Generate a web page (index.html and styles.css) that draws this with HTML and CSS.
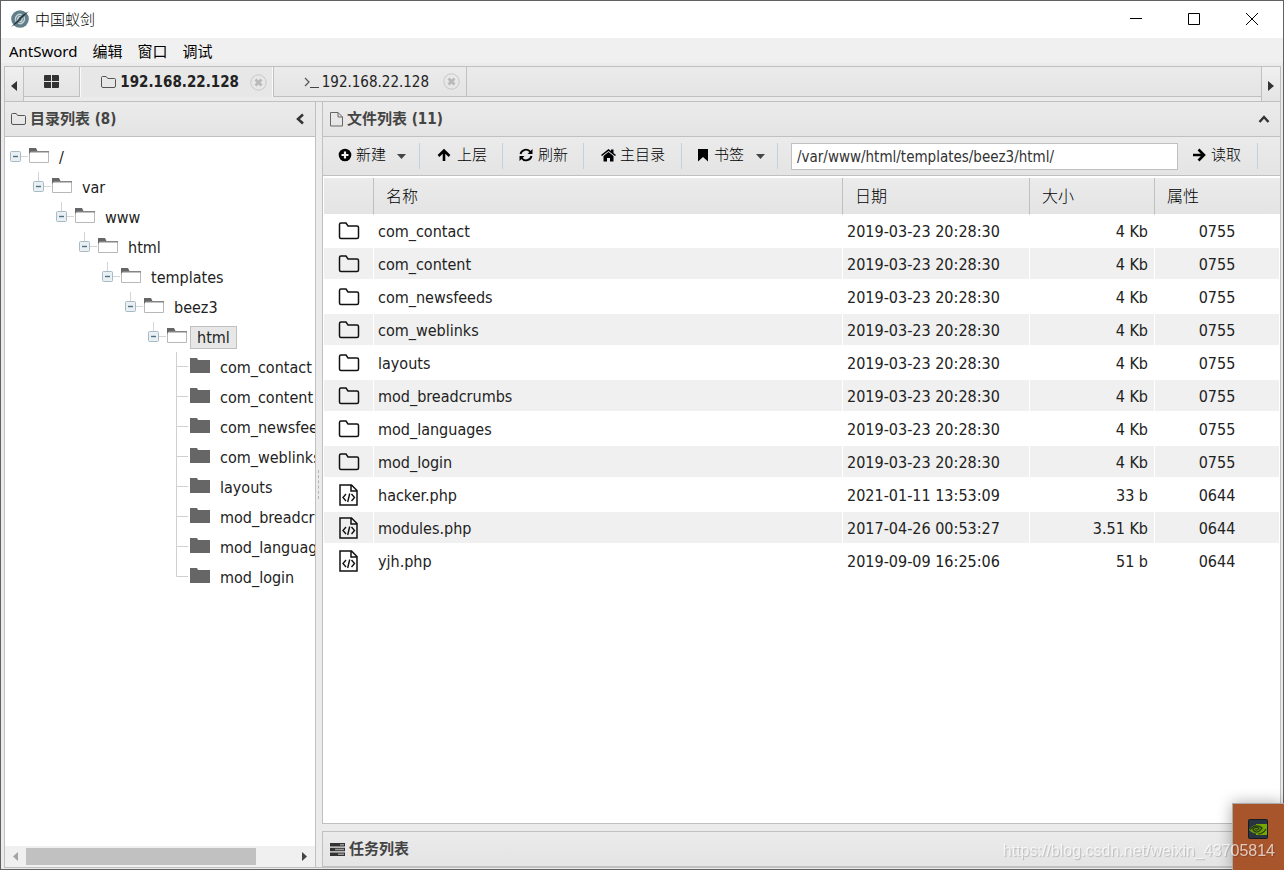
FILE: index.html
```html
<!DOCTYPE html>
<html lang="zh-CN">
<head>
<meta charset="utf-8">
<title>中国蚁剑</title>
<link rel="stylesheet" href="styles.css">
</head>
<body>
<svg class="defs" aria-hidden="true">
  <symbol id="node-open" viewBox="0 0 19 30"><path d="M11 14.500h7" stroke="#d4d4d4"/><rect x=".5" y="9.500" width="10" height="10" rx="1" fill="#e8f0f4" stroke="#a9bac3"/><path d="M3 14.500h5" stroke="#4f7082" stroke-width="1.400"/></symbol>
  <symbol id="node-child" viewBox="0 0 19 30"><path d="M5.500 0v9M11 14.500h7" stroke="#d4d4d4"/><rect x=".5" y="9.500" width="10" height="10" rx="1" fill="#e8f0f4" stroke="#a9bac3"/><path d="M3 14.500h5" stroke="#4f7082" stroke-width="1.400"/></symbol>
  <symbol id="node-leaf" viewBox="0 0 19 30"><path d="M5.500 0v30M5.500 14.500H17" stroke="#d0d0d0" fill="none"/></symbol>
  <symbol id="node-last" viewBox="0 0 19 30"><path d="M5.500 0v14.500H17" stroke="#d0d0d0" fill="none"/></symbol>
  <symbol id="dir-open" viewBox="0 0 20 16"><path d="M.5 3.500h19v11H.5z" fill="#fff" stroke="#b8b8b8"/><path d="M0 3h20v1.500H0z" fill="#858585"/><path d="M0 6V0h7l1.500 3H2z" fill="#666"/></symbol>
  <symbol id="dir" viewBox="0 0 20 16"><path d="M0 0h7l1 2h12v13H0z" fill="#666"/></symbol>
  <symbol id="folder" viewBox="0 0 22 20"><path d="M1.500 16V3.500Q1.500 2 3 2h5l2 3h9Q20.500 5 20.500 6.500V16q0 1.500-1.500 1.500H3Q1.500 17.500 1.500 16z" fill="none" stroke="#111" stroke-width="1.500"/></symbol>
  <symbol id="code" viewBox="0 0 20 22"><path d="M1 1h11.500L18 6.500V21H1zM12 1v6h6" fill="none" stroke="#111" stroke-width="1.500"/><path d="M7 10l-3 3.500L7 17M12.500 10l3 3.500-3 3.500M10.700 9.500L8.700 18" fill="none" stroke="#111" stroke-width="1.400"/></symbol>
  <symbol id="folder-thin" viewBox="0 0 15 14"><path d="M.5 11V2.500q0-1 1-1h3.700l1.500 2h6.800q1 0 1 1V11q0 1.500-1.500 1.500H2Q.5 12.500.5 11z" fill="none" stroke="#555"/></symbol>
  <symbol id="close" viewBox="0 0 17 17"><circle cx="8.500" cy="8.500" r="7.700" fill="none" stroke="#c6c6c6"/><path d="M5.500 5.500l6 6m0-6l-6 6" stroke="#b9b9b9" stroke-width="2.800"/></symbol>
</svg>
<div class="window">
  <header class="titlebar">
    <svg class="logo" width="20" height="18" viewBox="0 0 20 18"><circle cx="10" cy="9" r="8.800" fill="#627f89"/><path d="M6 11.500C4 6 9 3 12 5M14 6.500c2 5-3 8.500-6 6.500M8 10.500c-1-3 1-4.500 2.500-4M12 7.500c1 3-1 4.500-2.500 4" fill="none" stroke="#c5d4da" stroke-width="1.400"/><path d="M19 1L12 5.500 8 10 1 17l5.500-3.500L11 9z" fill="#26343b"/></svg>
    <h1>中国蚁剑</h1>
    <div class="controls">
      <button aria-label="最小化"><svg width="12" height="12"><path d="M0 5.500h12" stroke="#000"/></svg></button>
      <button aria-label="最大化"><svg width="12" height="12"><path d="M.5.5h11v11H.5z" fill="none" stroke="#000"/></svg></button>
      <button aria-label="关闭"><svg width="12" height="12"><path d="M0 0l12 12M12 0L0 12" stroke="#000"/></svg></button>
    </div>
  </header>
  <nav class="menu"><button>AntSword</button><button>编辑</button><button>窗口</button><button>调试</button></nav>
  <main class="frame">
    <div class="tabs">
      <button class="scroll" aria-label="向左"><svg width="6" height="10"><path d="M6 0v10L0 5z" fill="#333"/></svg></button>
      <div class="strip">
        <button class="tab home" aria-label="主页"><svg width="15" height="13"><path d="M0 1q0-1 1-1h6v6H0zM8 0h6q1 0 1 1v5H8zM0 7h7v6H1q-1 0-1-1zM8 7h7v5q0 1-1 1H8z" fill="#333"/></svg></button>
        <div class="tab active"><svg width="15" height="14"><use href="#folder-thin"/></svg><span>192.168.22.128</span><button aria-label="关闭标签"><svg width="17" height="17"><use href="#close"/></svg></button></div>
        <div class="tab"><svg width="15" height="14"><path d="M1 3l4 4-4 4" fill="none" stroke="#555" stroke-width="1.200"/><path d="M6 12.500h9" stroke="#444"/></svg><span>192.168.22.128</span><button aria-label="关闭标签"><svg width="17" height="17"><use href="#close"/></svg></button></div>
      </div>
      <button class="scroll right" aria-label="向右"><svg width="6" height="10"><path d="M0 0v10l6-5z" fill="#333"/></svg></button>
    </div>
    <div class="workspace">
      <aside class="panel side">
        <div class="panel-head"><svg width="15" height="14"><use href="#folder-thin"/></svg><h2>目录列表 (8)</h2><button aria-label="折叠"><svg width="10" height="12"><path d="M8 1.500L3 6l5 4.500" fill="none" stroke="#333" stroke-width="2.500"/></svg></button></div>
        <div class="tree">
          <ul>
            <li><div class="node"><svg width="19" height="30"><use href="#node-open"/></svg><svg class="dir" width="20" height="16"><use href="#dir-open"/></svg><span>/</span></div>
            <ul><li><div class="node"><svg width="19" height="30"><use href="#node-child"/></svg><svg class="dir" width="20" height="16"><use href="#dir-open"/></svg><span>var</span></div>
            <ul><li><div class="node"><svg width="19" height="30"><use href="#node-child"/></svg><svg class="dir" width="20" height="16"><use href="#dir-open"/></svg><span>www</span></div>
            <ul><li><div class="node"><svg width="19" height="30"><use href="#node-child"/></svg><svg class="dir" width="20" height="16"><use href="#dir-open"/></svg><span>html</span></div>
            <ul><li><div class="node"><svg width="19" height="30"><use href="#node-child"/></svg><svg class="dir" width="20" height="16"><use href="#dir-open"/></svg><span>templates</span></div>
            <ul><li><div class="node"><svg width="19" height="30"><use href="#node-child"/></svg><svg class="dir" width="20" height="16"><use href="#dir-open"/></svg><span>beez3</span></div>
            <ul><li><div class="node"><svg width="19" height="30"><use href="#node-child"/></svg><svg class="dir" width="20" height="16"><use href="#dir-open"/></svg><span class="selected">html</span></div>
              <ul>
                <li class="node"><svg width="19" height="30"><use href="#node-leaf"/></svg><svg class="dir" width="20" height="16"><use href="#dir"/></svg><span>com_contact</span></li>
                <li class="node"><svg width="19" height="30"><use href="#node-leaf"/></svg><svg class="dir" width="20" height="16"><use href="#dir"/></svg><span>com_content</span></li>
                <li class="node"><svg width="19" height="30"><use href="#node-leaf"/></svg><svg class="dir" width="20" height="16"><use href="#dir"/></svg><span>com_newsfeeds</span></li>
                <li class="node"><svg width="19" height="30"><use href="#node-leaf"/></svg><svg class="dir" width="20" height="16"><use href="#dir"/></svg><span>com_weblinks</span></li>
                <li class="node"><svg width="19" height="30"><use href="#node-leaf"/></svg><svg class="dir" width="20" height="16"><use href="#dir"/></svg><span>layouts</span></li>
                <li class="node"><svg width="19" height="30"><use href="#node-leaf"/></svg><svg class="dir" width="20" height="16"><use href="#dir"/></svg><span>mod_breadcrumbs</span></li>
                <li class="node"><svg width="19" height="30"><use href="#node-leaf"/></svg><svg class="dir" width="20" height="16"><use href="#dir"/></svg><span>mod_languages</span></li>
                <li class="node"><svg width="19" height="30"><use href="#node-last"/></svg><svg class="dir" width="20" height="16"><use href="#dir"/></svg><span>mod_login</span></li>
              </ul>
            </li></ul></li></ul></li></ul></li></ul></li></ul></li></ul></li>
          </ul>
        </div>
        <div class="hscroll"><svg width="5" height="9"><path d="M5 0v9L0 4.500z" fill="#a3a3a3"/></svg><div class="track"><div class="thumb"></div></div><svg width="5" height="9"><path d="M0 0v9l5-4.500z" fill="#444"/></svg></div>
      </aside>
      <div class="splitter"><i></i></div>
      <div class="content">
        <section class="panel files">
          <div class="panel-head"><svg width="14" height="16"><path d="M1.500 1.500H9l4.500 4.500v9h-12zM9 1.500V6h4.500" fill="none" stroke="#666"/></svg><h2>文件列表 (11)</h2><button aria-label="折叠"><svg width="12" height="10"><path d="M1.500 8L6 3l4.500 5" fill="none" stroke="#333" stroke-width="2.500"/></svg></button></div>
          <div class="toolbar">
            <button class="new"><svg width="14" height="14"><circle cx="7" cy="7" r="6.300"/><path d="M7 3.500v7M3.500 7h7" stroke="#eee" stroke-width="2.200"/></svg><span>新建</span><svg class="caret" width="9" height="5"><path d="M0 0h9L4.500 5z" fill="#444"/></svg></button>
            <button class="up"><svg width="14" height="14"><path d="M7 13V3M1.500 8L7 2.500 12.500 8" fill="none" stroke="#000" stroke-width="2.600"/></svg><span>上层</span></button>
            <button class="refresh"><svg width="14" height="14"><path d="M1.500 6C2.500 1.500 8.500 0 11.500 4M12.500 8C11.500 12.500 5.500 14 2.500 10" fill="none" stroke="#000" stroke-width="1.900"/><path d="M13.500 1V6H8.500zM.5 13V8h5z"/></svg><span>刷新</span></button>
            <button class="homedir"><svg width="15" height="14"><path d="M0 7l7.500-6L10 3V1.500h2.500V5L15 7l-1 1-6.500-5L1 8z"/><path d="M2.500 8l5-4 5 4v5.500H9V10H6v3.500H2.500z"/></svg><span>主目录</span></button>
            <button class="bookmark"><svg width="12" height="14"><path d="M1 1h10v12.500L6 9l-5 4.500z"/></svg><span>书签</span><svg class="caret" width="9" height="5"><path d="M0 0h9L4.500 5z" fill="#444"/></svg></button>
            <input type="text" aria-label="路径" value="/var/www/html/templates/beez3/html/">
            <button class="read"><svg width="14" height="14"><path d="M1 7h10M6.500 1.500L12 7l-5.500 5.500" fill="none" stroke="#000" stroke-width="2.600"/></svg><span>读取</span></button>
          </div>
          <table>
            <colgroup><col class="c-icon"><col><col class="c-date"><col class="c-size"><col class="c-attr"></colgroup>
            <thead><tr><th></th><th>名称</th><th>日期</th><th>大小</th><th>属性</th></tr></thead>
            <tbody>
              <tr><td><svg width="22" height="20"><use href="#folder"/></svg></td><td>com_contact</td><td>2019-03-23 20:28:30</td><td>4 Kb</td><td>0755</td></tr>
              <tr><td><svg width="22" height="20"><use href="#folder"/></svg></td><td>com_content</td><td>2019-03-23 20:28:30</td><td>4 Kb</td><td>0755</td></tr>
              <tr><td><svg width="22" height="20"><use href="#folder"/></svg></td><td>com_newsfeeds</td><td>2019-03-23 20:28:30</td><td>4 Kb</td><td>0755</td></tr>
              <tr><td><svg width="22" height="20"><use href="#folder"/></svg></td><td>com_weblinks</td><td>2019-03-23 20:28:30</td><td>4 Kb</td><td>0755</td></tr>
              <tr><td><svg width="22" height="20"><use href="#folder"/></svg></td><td>layouts</td><td>2019-03-23 20:28:30</td><td>4 Kb</td><td>0755</td></tr>
              <tr><td><svg width="22" height="20"><use href="#folder"/></svg></td><td>mod_breadcrumbs</td><td>2019-03-23 20:28:30</td><td>4 Kb</td><td>0755</td></tr>
              <tr><td><svg width="22" height="20"><use href="#folder"/></svg></td><td>mod_languages</td><td>2019-03-23 20:28:30</td><td>4 Kb</td><td>0755</td></tr>
              <tr><td><svg width="22" height="20"><use href="#folder"/></svg></td><td>mod_login</td><td>2019-03-23 20:28:30</td><td>4 Kb</td><td>0755</td></tr>
              <tr><td><svg width="20" height="22"><use href="#code"/></svg></td><td>hacker.php</td><td>2021-01-11 13:53:09</td><td>33 b</td><td>0644</td></tr>
              <tr><td><svg width="20" height="22"><use href="#code"/></svg></td><td>modules.php</td><td>2017-04-26 00:53:27</td><td>3.51 Kb</td><td>0644</td></tr>
              <tr><td><svg width="20" height="22"><use href="#code"/></svg></td><td>yjh.php</td><td>2019-09-09 16:25:06</td><td>51 b</td><td>0644</td></tr>
            </tbody>
          </table>
        </section>
        <section class="panel"><div class="panel-head"><svg width="16" height="13"><path d="M1 0h15v3.500H1zM1 4.700h15v3.500H1zM1 9.400h15v3.500H1z" fill="#333"/><path d="M11 1h4v1.500h-4zM6 5.700h9v1.500H6zM9 10.400h6v1.500H9z" fill="#999"/></svg><h2>任务列表</h2></div></section>
      </div>
    </div>
  </main>
</div>
<div class="tray"><svg width="20" height="20"><rect x=".5" y=".5" width="19" height="19" rx="1" fill="#293440" stroke="#141b23"/><path d="M8 5h11v11H8z" fill="#76a900"/><path d="M1 10.500Q8 2 16 9q-3 6-8 5.500Q3 14 1 10.500z" fill="#6a9a12"/><path d="M2 10.500Q8 4 14 9q-3 4.500-6 4-3-1-3-3Q8 7 11 9.500q-2 2.500-4 1M10 15q5 0 8-5" fill="none" stroke="#26370f" stroke-width="1.200"/></svg></div>
<div class="watermark">https://blog.csdn.net/weixin_43705814</div>
</body>
</html>
```

FILE: styles.css
```css
* { box-sizing: border-box; }
body { margin: 0; font: 16px "DejaVu Sans Condensed", "Noto Sans CJK SC", sans-serif; color: #222; overflow: hidden; }
button { border: 0; padding: 0; background: none; font: inherit; color: inherit; }
svg { display: block; flex: none; }
h1, h2 { margin: 0; }
ul { list-style: none; margin: 0; padding: 0; }
.defs { position: absolute; width: 0; height: 0; }
.window { height: 100vh; display: flex; flex-direction: column; background: #ebebeb; border: 1px solid #626064; }
.titlebar { height: 37px; flex: none; background: #fff; display: flex; align-items: center; padding: 0 2px 2px 9px; gap: 5px; }
.titlebar h1 { font: 300 15px "Noto Sans CJK SC", sans-serif; color: #000; }
.controls { display: flex; margin-left: auto; }
.controls button { width: 58px; height: 35px; display: grid; place-items: center; }
.menu { height: 25px; flex: none; background: #f0f0f0; display: flex; align-items: center; gap: 15px; padding-left: 8px; font: 15px "Noto Sans", "Noto Sans CJK SC", sans-serif; color: #000; }
.frame { flex: 1; min-height: 0; display: flex; flex-direction: column; margin: 3px 2px 1px 3px; border: 1px solid #c0c0c0; }
.tabs { height: 35px; flex: none; display: flex; border-bottom: 1px solid #c0c0c0; font-size: 15px; }
.scroll { width: 19px; background: linear-gradient(#f0f0f0, #e4e4e4); border-right: 1px solid #c0c0c0; display: grid; place-items: center; padding-top: 3px; }
.scroll.right { border-right: 0; border-left: 1px solid #c0c0c0; }
.strip { flex: 1; height: 30px; display: flex; background: linear-gradient(#ebebeb, #e4e4e4); border-bottom: 1px solid #c0c0c0; }
.tab { width: 193px; display: flex; align-items: center; justify-content: flex-end; border-right: 1px solid #c0c0c0; padding-right: 6px; }
.tab span { margin: 0 14px 0 3px; }
.tab.home { width: 56px; justify-content: center; padding: 0; }
.tab.active { width: 194px; height: 30px; font-weight: bold; background: #e7e7e7; box-shadow: inset 1px 0 #fafafa, inset -1px 0 #fafafa; }
.tab.active span { margin: 0 11px 0 4px; }
.workspace { flex: 1; min-height: 0; display: flex; }
.panel-head { height: 35px; flex: none; display: flex; align-items: center; gap: 4px; padding: 0 10px 0 6px; background: linear-gradient(#ebebeb, #e4e4e4); border-bottom: 1px solid #c0c0c0; }
.panel-head h2 { font: bold 15px/22px "DejaVu Sans Condensed", "Noto Sans CJK SC", sans-serif; color: #444; }
.panel-head button { margin-left: auto; }
.side { width: 311px; flex: none; display: flex; flex-direction: column; background: #fff; border-right: 1px solid #c0c0c0; }
.tree { flex: 1; min-height: 0; overflow: hidden; padding: 5px 0 0 5px; }
.tree ul ul { padding-left: 23px; }
.node { height: 30px; display: flex; align-items: center; white-space: nowrap; }
.node .dir { margin: 0 3px 2px 0; }
.node span { border: 1px solid transparent; padding: 0 6px; line-height: 21px; }
.node .selected { background: #e7e7e7; border-color: #c0c0c0; }
.hscroll { height: 21px; flex: none; display: flex; align-items: center; padding: 0 8px; gap: 8px; background: #f0f0f0; }
.track { flex: 1; }
.thumb { width: 86%; height: 17px; background: #c1c1c1; }
.splitter { width: 6px; flex: none; display: grid; place-items: center start; padding-left: 2px; }
.splitter i { height: 29px; border-left: 1px dashed #b5b5b5; }
.content { flex: 1; min-width: 0; display: flex; flex-direction: column; gap: 7px; }
.content .panel { border: 1px solid #c0c0c0; border-top: 0; border-right: 0; }
.content .panel + .panel { border-top: 1px solid #c0c0c0; border-bottom: 0; }
.files { flex: 1; min-height: 0; background: #fff; }
.toolbar { height: 39px; display: flex; align-items: center; padding-right: 22px; background: linear-gradient(#ebebeb, #e4e4e4); border-bottom: 1px solid #c0c0c0; font: 300 15px/22px "Noto Sans CJK SC", sans-serif; color: #000; }
.toolbar button { height: 26px; display: flex; align-items: center; gap: 4px; border-right: 1px solid #c2d2d9; white-space: nowrap; flex: none; }
.toolbar button svg, .toolbar button span { margin-bottom: 2px; }
.toolbar button span { padding-bottom: 2px; }
.toolbar .new { width: 97px; padding-left: 15px; }
.toolbar .up { width: 83px; padding-left: 17px; gap: 6px; }
.toolbar .refresh { width: 81px; padding-left: 16px; gap: 5px; }
.toolbar .homedir { width: 98px; padding-left: 17px; }
.toolbar .bookmark { width: 96px; padding-left: 15px; gap: 5px; }
.toolbar .read { width: 66px; gap: 5px; }
.toolbar button .caret { margin: 0 0 0 7px; }
.toolbar input { flex: 1; min-width: 0; height: 27px; margin: 1px 14px 0 13px; padding: 0 5px; border: 1px solid #c0c0c0; background: #fff; color: #333; font: 15px "DejaVu Sans Condensed", sans-serif; }
table { width: 100%; table-layout: fixed; border-collapse: separate; border-spacing: 0; padding: 2px 0 0 1px; }
.c-icon { width: 50px; }
.c-date { width: 187px; }
.c-size { width: 125px; }
.c-attr { width: 125px; }
th { height: 37px; padding: 0 12px 2px; text-align: left; font: 300 16px "Noto Sans CJK SC", sans-serif; color: #000; background: linear-gradient(#ebebeb, #e4e4e4) padding-box; border-right: 1px solid #c0c0c0; border-bottom: 1px solid #fff; }
th:last-child { border-right: 0; }
td { height: 33px; padding: 1px 4px 0; border-right: 1px solid #fff; border-bottom: 2px solid #fff; background-clip: padding-box; white-space: nowrap; }
td svg { margin: 0 auto; }
tbody tr:nth-child(even) td { background-color: #f0f0f0; }
td:nth-child(4) { text-align: right; padding-right: 6px; }
td:nth-child(5) { text-align: center; }
.tray { position: fixed; right: 0; bottom: 0; width: 52px; height: 67px; padding: 15px; background: #a9552c; border: 1px solid #aaa; border-width: 1px 0 0 1px; box-shadow: 0 0 14px #0005; }
.watermark { position: fixed; right: 9px; bottom: 10px; font: 16px/18px "Liberation Sans", sans-serif; color: #ffffffb0; text-shadow: 1px 1px 1px #0003; }
```
